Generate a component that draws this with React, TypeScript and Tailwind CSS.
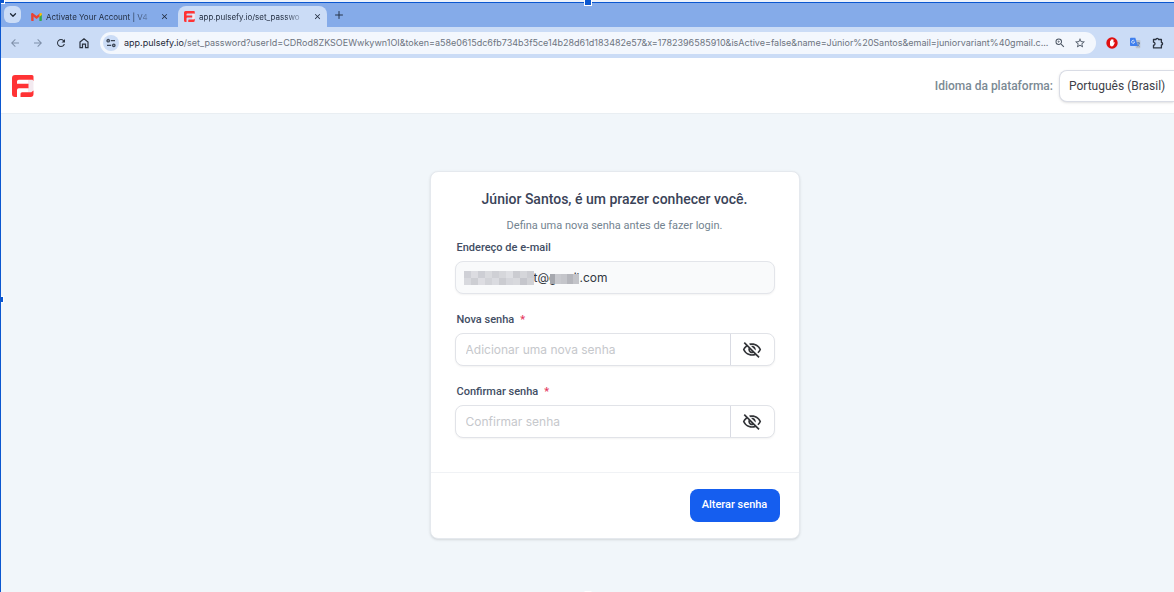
import { useState } from 'react';
import type { ReactNode } from 'react';
import {
  MdArrowBack,
  MdArrowForward,
  MdClose,
  MdOutlineVisibility,
  MdOutlineVisibilityOff,
  MdRefresh,
  MdStarBorder,
  MdZoomIn,
} from 'react-icons/md';
import { ChevronDown, Plus } from 'lucide-react';

const URL_HOST = 'app.pulsefy.io';
const URL_PATH =
  '/set_password?userId=CDRod8ZKSOEWwkywn1OI&token=a58e0615dc6fb734b3f5ce14b28d61d183482e57&x=1782396585910&isActive=false&name=Júnior%20Santos&email=juniorvariant%40gmail.c...';

function BrandLogo({ className }: { className: string }) {
  return (
    <svg viewBox="0 0 22 22" className={className} aria-hidden="true">
      <path fill="#f3eaf0" d="M16 5h5.500v12H16z" />
      <path
        fill="#ff3335"
        d="M3 0h17a1.5 1.5 0 0 1 1.5 1.5V6l-1-1.2H6.8a1.8 1.8 0 0 0-1.8 1.8V8.8h11.5v4.4H6.8A1.8 1.8 0 0 0 5 15v7H3a3 3 0 0 1-3-3V3a3 3 0 0 1 3-3z"
      />
      <path fill="#ff3335" d="M21.5 15.5V19a3 3 0 0 1-3 3H8.5v-3.200a1.600 1.600 0 0 1 1.600-1.600h9.200z" />
    </svg>
  );
}

function GmailIcon() {
  return (
    <svg viewBox="0 0 24 18" className="h-2 w-[11px] shrink-0" aria-hidden="true">
      <path fill="#34a853" d="M18.5 18h3.900a1.500 1.500 0 0 0 1.600-1.500V3l-5.500 4z" />
      <path fill="#ea4335" d="M5.500 18H1.600A1.500 1.500 0 0 1 0 16.500V3l5.500 4z" />
      <path fill="#ea4335" d="M0 2.500C0 .3 2.300-.7 4 .5l8 6 8-6v7l-8 6-6.500-5L0 4.500z" />
      <path fill="#fbbc04" d="M18.500 1.600 20 .5c1.700-1.200 4-.2 4 2v2l-5.500 4.200z" />
    </svg>
  );
}

function HomeIcon() {
  return (
    <svg viewBox="0 0 12 12" className="size-3" fill="none" stroke="#2b3340" strokeWidth="1.2" aria-hidden="true">
      <path d="M2 5 6 1.7 10 5v5.600H7.500V7.200h-3v3.400H2z" />
    </svg>
  );
}

function TuneIcon() {
  return (
    <svg viewBox="0 0 12 12" className="size-3" fill="none" stroke="#3c4655" strokeWidth="1.3" aria-hidden="true">
      <circle cx="3.200" cy="3.700" r="1.200" />
      <path d="M5.800 3.700H10M2 8.300H6.200" />
      <circle cx="8.800" cy="8.300" r="1.200" />
    </svg>
  );
}

function AdBlockIcon() {
  return (
    <svg viewBox="0 0 12 12" className="size-3" aria-hidden="true">
      <circle cx="6" cy="6" r="5.700" fill="#e01010" />
      <path
        fill="#fff"
        d="M4 4.200c0-.6.800-.6.800 0V3c0-.6.900-.6.900 0v-.4c0-.6.900-.6.900 0V3c0-.6.900-.6.900 0v2.800l.5-.5c.5-.4 1 .1.700.6L7.600 8.300C7.200 9.100 6.700 9.400 6 9.400c-1.300 0-2-.8-2-2z"
      />
    </svg>
  );
}

function TranslateIcon() {
  return (
    <svg viewBox="0 0 12 12" className="size-3" aria-hidden="true">
      <path fill="#bcc3cd" d="M5 3h5.500a.8.8 0 0 1 .8.800v6.700a.8.8 0 0 1-.8.8H7z" />
      <path
        fill="none"
        stroke="#4a72b0"
        strokeWidth=".8"
        d="M7.500 6h3.500M9.200 5v1M10.400 6c-.3 1.500-1.300 2.700-2.400 3.300M8.200 7.300c.5.900 1.300 1.500 2.200 2"
      />
      <path fill="#3f7fee" d="M1.800.8h4.500L8.800 9H1.800a.8.8 0 0 1-.8-.8V1.600a.8.8 0 0 1 .8-.8z" />
      <path fill="none" stroke="#fff" strokeWidth=".7" d="M5.400 4A1.500 1.500 0 1 0 5.600 5.100H4.500" />
    </svg>
  );
}

function ExtensionIcon() {
  return (
    <svg
      viewBox="0 0 12 12"
      className="size-3"
      fill="none"
      stroke="#2b3340"
      strokeWidth="1.3"
      strokeLinejoin="round"
      aria-hidden="true"
    >
      <path d="M1.500 2.500H4a1.200 1.200 0 0 1 2.400 0h3v3a1.200 1.200 0 0 1 0 2.400v3H1.500V8.200a1.500 1.500 0 0 0 0-3z" />
    </svg>
  );
}

interface TabProps {
  icon: ReactNode;
  title: string;
  active?: boolean;
}

function BrowserTab({ icon, title, active = false }: TabProps) {
  return (
    <div className={`flex h-[21px] w-[149px] items-center rounded-t-lg pl-1.5 pr-1 ${active ? 'bg-[#cbdcf6]' : ''}`}>
      <button
        type="button"
        className="flex min-w-0 flex-1 items-center gap-1 text-[8px] leading-3 text-[#1f2a3d]"
      >
        {icon}
        <span className="block flex-1 whitespace-nowrap text-left [mask-image:linear-gradient(to_right,#000_80%,transparent)]">
          {title}
        </span>
      </button>
      <button
        type="button"
        aria-label="Fechar guia"
        className="ml-1 flex size-3 items-center justify-center text-[#1f2a3d]"
      >
        <MdClose className="size-[9px]" />
      </button>
    </div>
  );
}

function BrowserChrome() {
  return (
    <div className="font-['Inter','Liberation_Sans',sans-serif]">
      <div className="h-0.5 bg-[#eef2f9]" />
      <div className="flex h-[25px] items-end border-t border-[#0b57d0] bg-[#85abe9] pl-[3px]">
        <button
          type="button"
          aria-label="Pesquisar guias"
          className="mb-1 flex size-[17px] items-center justify-center rounded-md bg-[#cbdcf6]"
        >
          <ChevronDown className="size-2.5 text-[#1f2937]" strokeWidth={3} />
        </button>
        <div className="ml-1 flex gap-1">
          <BrowserTab icon={<GmailIcon />} title="Activate Your Account | V4" />
          <BrowserTab active icon={<BrandLogo className="size-[11px] shrink-0" />} title="app.pulsefy.io/set_passwo" />
        </div>
        <button type="button" aria-label="Nova guia" className="mb-1.5 ml-1.5 text-[#27344a]">
          <Plus className="size-3" />
        </button>
      </div>

      <div className="flex h-[31px] items-center bg-[#cbdcf6] pl-2 pr-2.5">
        <div className="flex items-center gap-[11px] text-[#2b3340]">
          <button type="button" aria-label="Voltar" className="text-[#7f8fa9]">
            <MdArrowBack className="size-3" />
          </button>
          <button type="button" aria-label="Avançar" className="text-[#7f8fa9]">
            <MdArrowForward className="size-3" />
          </button>
          <button type="button" aria-label="Recarregar">
            <MdRefresh className="size-3" />
          </button>
          <button type="button" aria-label="Página inicial">
            <HomeIcon />
          </button>
        </div>

        <div className="ml-2.5 flex h-[22px] min-w-0 flex-1 items-center rounded-full bg-[#f3f7fd] pl-[3px] pr-2.5">
          <button
            type="button"
            aria-label="Informações do site"
            className="flex size-4 shrink-0 items-center justify-center rounded-full bg-[#cbdcf6]"
          >
            <TuneIcon />
          </button>
          <div className="ml-[5px] min-w-0 flex-1 overflow-hidden whitespace-nowrap text-[9px] leading-4 text-[#6d7480]">
            <span className="text-[#1f2937]">{URL_HOST}</span>
            {URL_PATH}
          </div>
          <button type="button" aria-label="Zoom" className="text-[#4b5563]">
            <MdZoomIn className="size-3" />
          </button>
          <button type="button" aria-label="Adicionar aos favoritos" className="ml-2 text-[#4b5563]">
            <MdStarBorder className="size-3" />
          </button>
        </div>

        <div className="ml-2.5 flex items-center gap-[11px]">
          <button type="button" aria-label="Bloqueador de anúncios">
            <AdBlockIcon />
          </button>
          <button type="button" aria-label="Tradutor">
            <TranslateIcon />
          </button>
          <button type="button" aria-label="Extensões">
            <ExtensionIcon />
          </button>
        </div>
      </div>
    </div>
  );
}

function PlatformHeader() {
  return (
    <header className="flex h-14 items-center justify-between border-b border-[#e9eef2] bg-white pl-[11px]">
      <a href="#inicio" aria-label="Pulsefy">
        <BrandLogo className="size-[22px]" />
      </a>
      <div className="flex items-center">
        <label htmlFor="language" className="text-[12px] font-medium leading-5 text-[#7b8a94]">
          Idioma da plataforma:
        </label>
        <select
          id="language"
          defaultValue="pt-BR"
          className="ml-1.5 h-8 w-[115px] appearance-none rounded-l-lg border border-r-0 border-[#d9dce5] bg-white pl-[9px] text-[12px] text-[#3c4048] shadow-sm"
        >
          <option value="pt-BR">Português (Brasil)</option>
          <option value="en-US">English (US)</option>
        </select>
      </div>
    </header>
  );
}

// Pixelated blocks that hide part of the e-mail address
const NAME_MASK = [
  '#cfd0d6', '#dcdce1', '#cdced4', '#d9dade', '#cfd0d5', '#d6d7db', '#dedfe3', '#cbccd1', '#d5d6da', '#cccdd2',
  '#d8d9de', '#cdced3', '#dddde2', '#d2d3d8', '#dadbe0', '#cbccd1', '#d5d6db', '#d8d9dd', '#c5c6cc', '#d1d2d6',
];
const DOMAIN_MASK = ['#a6a8ae', '#c8c9ce', '#c4c5ca', '#b5b6bc', '#c3c4c9'];

function EmailField() {
  return (
    <div>
      <label htmlFor="email" className="block pl-0.5 text-[11px] font-medium leading-5 text-[#424e64]">
        Endereço de e-mail
      </label>
      <div className="mt-[3px] flex h-[33px] items-center rounded-lg border border-[#e3e5ea] bg-[#f9fafb] pl-2 shadow-xs">
        <div className="grid w-[70px] shrink-0 grid-cols-10" aria-hidden="true">
          {NAME_MASK.map((color, i) => (
            <span key={i} className="h-[7px]" style={{ backgroundColor: color }} />
          ))}
        </div>
        <div className="relative flex-1">
          <input
            id="email"
            type="text"
            readOnly
            value="t@gmail.com"
            className="block w-full bg-transparent font-['Inter','Liberation_Sans',sans-serif] text-[12px] leading-5 text-[#323741] outline-none"
          />
          <div className="absolute left-4 top-1.5 grid w-[29px] grid-cols-5" aria-hidden="true">
            {DOMAIN_MASK.map((color, i) => (
              <span key={i} className="h-2.5" style={{ backgroundColor: color }} />
            ))}
          </div>
        </div>
      </div>
    </div>
  );
}

interface PasswordFieldProps {
  id: string;
  label: string;
  placeholder: string;
}

function PasswordField({ id, label, placeholder }: PasswordFieldProps) {
  const [visible, setVisible] = useState(false);

  return (
    <div>
      <label htmlFor={id} className="block pl-0.5 text-[11px] font-medium leading-5 text-[#424e64]">
        {label}
        <span className="ml-1.5 text-[#e5385d]">*</span>
      </label>
      <div className="mt-[3px] flex h-[33px] overflow-hidden rounded-lg border border-[#e1e3e8] bg-white shadow-xs">
        <input
          id={id}
          type={visible ? 'text' : 'password'}
          placeholder={placeholder}
          className="min-w-0 flex-1 pl-2.5 font-['Inter','Liberation_Sans',sans-serif] text-[12px] text-[#323741] outline-none placeholder:text-[#c6c8cc]"
        />
        <button
          type="button"
          aria-label={visible ? 'Ocultar senha' : 'Mostrar senha'}
          onClick={() => setVisible(!visible)}
          className="flex w-11 items-center justify-center border-l border-[#d9dbe3] text-[#333539]"
        >
          {visible ? <MdOutlineVisibility className="size-5" /> : <MdOutlineVisibilityOff className="size-5" />}
        </button>
      </div>
    </div>
  );
}

function PasswordCard() {
  return (
    <form
      onSubmit={(e) => e.preventDefault()}
      className="w-full max-w-[370px] rounded-lg border border-[#e5e9ee] bg-white shadow-sm"
    >
      <div className="px-6 pb-[34px] pt-[15px]">
        <h1 className="text-center text-[14px] font-medium leading-6 text-[#3a4358]">
          Júnior Santos, é um prazer conhecer você.
        </h1>
        <p className="mb-0.5 mt-[5px] text-center text-[11px] leading-5 text-[#738390]">
          Defina uma nova senha antes de fazer login.
        </p>
        <div className="flex flex-col gap-4">
          <EmailField />
          <PasswordField id="new-password" label="Nova senha" placeholder="Adicionar uma nova senha" />
          <PasswordField id="confirm-password" label="Confirmar senha" placeholder="Confirmar senha" />
        </div>
      </div>
      <div className="flex justify-end border-t border-[#f0f2f5] px-[19px] py-4">
        <button type="submit" className="h-[33px] w-[90px] rounded-lg bg-[#155eef] text-[11px] font-medium text-white">
          Alterar senha
        </button>
      </div>
    </form>
  );
}

export default function App() {
  return (
    <div className="relative flex min-h-screen flex-col overflow-hidden border-l border-[#0b57d0] bg-[#f1f6fa] font-['Roboto','Liberation_Sans',sans-serif]">
      <BrowserChrome />
      <PlatformHeader />
      <main className="flex flex-1 items-start justify-center pb-8 pl-[54px] pt-[57px]">
        <PasswordCard />
      </main>

      {/* resize handles of the selection frame */}
      <span className="absolute -left-1 -top-1 size-2 border border-white bg-[#0b57d0]" />
      <span className="absolute left-1/2 -top-0.5 size-2 -translate-x-1/2 border border-white bg-[#0b57d0]" />
      <span className="absolute -left-1 top-1/2 size-[7px] border border-white bg-[#0b57d0]" />
      <span className="absolute bottom-0 left-1/2 h-px w-[7px] -translate-x-1/2 bg-white" />
    </div>
  );
}
